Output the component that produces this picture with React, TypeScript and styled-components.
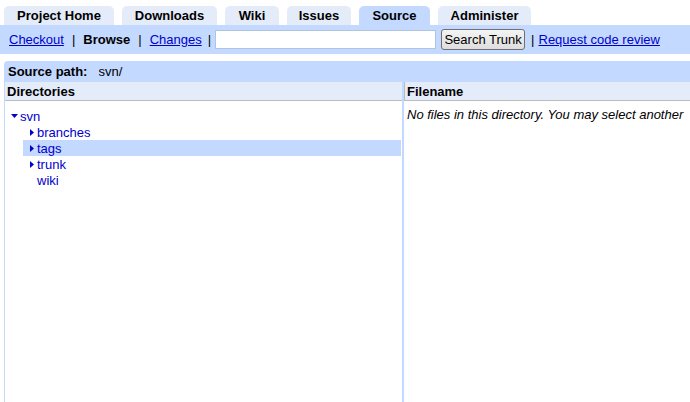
import React from "react";
import styled, { createGlobalStyle } from "styled-components";

const GlobalStyle = createGlobalStyle`
  body {
    margin: 0;
    background: #fff;
    font-family: "Liberation Sans", Arial, sans-serif;
    font-size: 13px;
    color: #000;
    overflow: hidden;
  }
`;

const TabBar = styled.div`
  display: flex;
  align-items: flex-end;
  gap: 8px;
  padding: 6px 0 0 4px;
  height: 19px;
`;

const Tab = styled.div<{ $active?: boolean; $w: number }>`
  width: ${(p) => p.$w}px;
  height: 19px;
  display: flex;
  align-items: center;
  justify-content: center;
  font-weight: bold;
  background: ${(p) => (p.$active ? "#c3d9ff" : "#e5ecf9")};
  border-radius: 5px 5px 0 0;
`;

const SubNav = styled.div`
  height: 29px;
  background: #c3d9ff;
  display: flex;
  align-items: center;
  padding-left: 9px;
  white-space: nowrap;
`;

const NavLink = styled.a`
  color: #0000cc;
  text-decoration: underline;
  cursor: pointer;
`;

const Current = styled.span`
  font-weight: bold;
`;

const Sep = styled.span<{ $before?: number; $after?: number }>`
  margin: 0 ${(p) => p.$after ?? 8}px 0 ${(p) => p.$before ?? 8}px;
`;

const SearchInput = styled.input`
  width: 217px;
  height: 15px;
  padding: 1px;
  border: 1px solid #b0c4e0;
  background: #fff;
  font: inherit;
  margin-right: 5px;
`;

const SearchButton = styled.button`
  height: 21px;
  width: 84px;
  padding: 0;
  border: 1px solid #707070;
  border-radius: 3px;
  background: linear-gradient(#f4f4f4, #dedede);
  font-family: "Liberation Sans", Arial, sans-serif;
  font-size: 13px;
  color: #000;
`;

const PathBar = styled.div`
  margin: 7px 0 0 4px;
  height: 21px;
  background: #c3d9ff;
  border-radius: 4px 0 0 0;
  display: flex;
  align-items: center;
  padding-left: 4px;
`;

const PathLabel = styled.span`
  font-weight: bold;
  margin-right: 11px;
`;

const Columns = styled.div`
  display: grid;
  grid-template-columns: 399px 1fr;
  margin-left: 4px;
  border-left: 1px solid #c3d9ff;
  height: 340px;
`;

const Column = styled.div<{ $left?: boolean }>`
  border-right: ${(p) => (p.$left ? "2px solid #c3d9ff" : "none")};
  display: flex;
  flex-direction: column;
  min-width: 0;
`;

const Header = styled.div<{ $divider?: boolean }>`
  height: 18px;
  background: #e5ecf9;
  border-bottom: 1px solid #bbb;
  border-left: ${(p) => (p.$divider ? "1px solid #bbb" : "none")};
  font-weight: bold;
  display: flex;
  align-items: center;
  padding-left: 2px;
  white-space: nowrap;
`;

const Tree = styled.div`
  padding: 7px 0 0 6px;
`;

const Node = styled.div<{ $selected?: boolean; $child?: boolean }>`
  height: 16px;
  display: flex;
  align-items: center;
  padding-left: ${(p) => (p.$child ? 7 : 0)}px;
  margin-left: ${(p) => (p.$child ? 12 : 0)}px;
  margin-right: 1px;
  background: ${(p) => (p.$selected ? "#c3d9ff" : "transparent")};
  color: #0000cc;
`;

const Twisty = styled.span<{ $w: number }>`
  width: ${(p) => p.$w}px;
  height: 16px;
  display: flex;
  align-items: center;
  justify-content: flex-start;
  margin-right: 2px;
`;

const Empty = styled.div`
  padding: 6px 0 0 3px;
  font-style: italic;
  white-space: nowrap;
`;

const Down = () => (
  <svg width="7" height="4" viewBox="0 0 7 4">
    <polygon points="0,0 7,0 3.5,4" fill="#0000cc" />
  </svg>
);

const Right = () => (
  <svg width="4" height="7" viewBox="0 0 4 7">
    <polygon points="0,0 4,3.5 0,7" fill="#0000cc" />
  </svg>
);

const tabs = [
  { label: "Project Home", w: 110 },
  { label: "Downloads", w: 95 },
  { label: "Wiki", w: 54 },
  { label: "Issues", w: 64 },
  { label: "Source", w: 71, active: true },
  { label: "Administer", w: 93 },
];

const children = [
  { name: "branches", arrow: true },
  { name: "tags", arrow: true, selected: true },
  { name: "trunk", arrow: true },
  { name: "wiki", arrow: false },
];

export default function App() {
  return (
    <>
      <GlobalStyle />
      <TabBar>
        {tabs.map((t) => (
          <Tab key={t.label} $w={t.w} $active={t.active}>
            {t.label}
          </Tab>
        ))}
      </TabBar>
      <SubNav>
        <NavLink>Checkout</NavLink>
        <Sep>|</Sep>
        <Current>Browse</Current>
        <Sep>|</Sep>
        <NavLink>Changes</NavLink>
        <Sep $before={6} $after={4}>|</Sep>
        <SearchInput type="text" />
        <SearchButton>Search Trunk</SearchButton>
        <Sep $before={6} $after={4}>|</Sep>
        <NavLink>Request code review</NavLink>
      </SubNav>
      <PathBar>
        <PathLabel>Source path:</PathLabel>
        <span>svn/</span>
      </PathBar>
      <Columns>
        <Column $left>
          <Header>Directories</Header>
          <Tree>
            <Node>
              <Twisty $w={7}>
                <Down />
              </Twisty>
              svn
            </Node>
            {children.map((c) => (
              <Node key={c.name} $child $selected={c.selected}>
                <Twisty $w={5}>{c.arrow ? <Right /> : null}</Twisty>
                {c.name}
              </Node>
            ))}
          </Tree>
        </Column>
        <Column>
          <Header $divider>Filename</Header>
          <Empty>No files in this directory. You may select another</Empty>
        </Column>
      </Columns>
    </>
  );
}
